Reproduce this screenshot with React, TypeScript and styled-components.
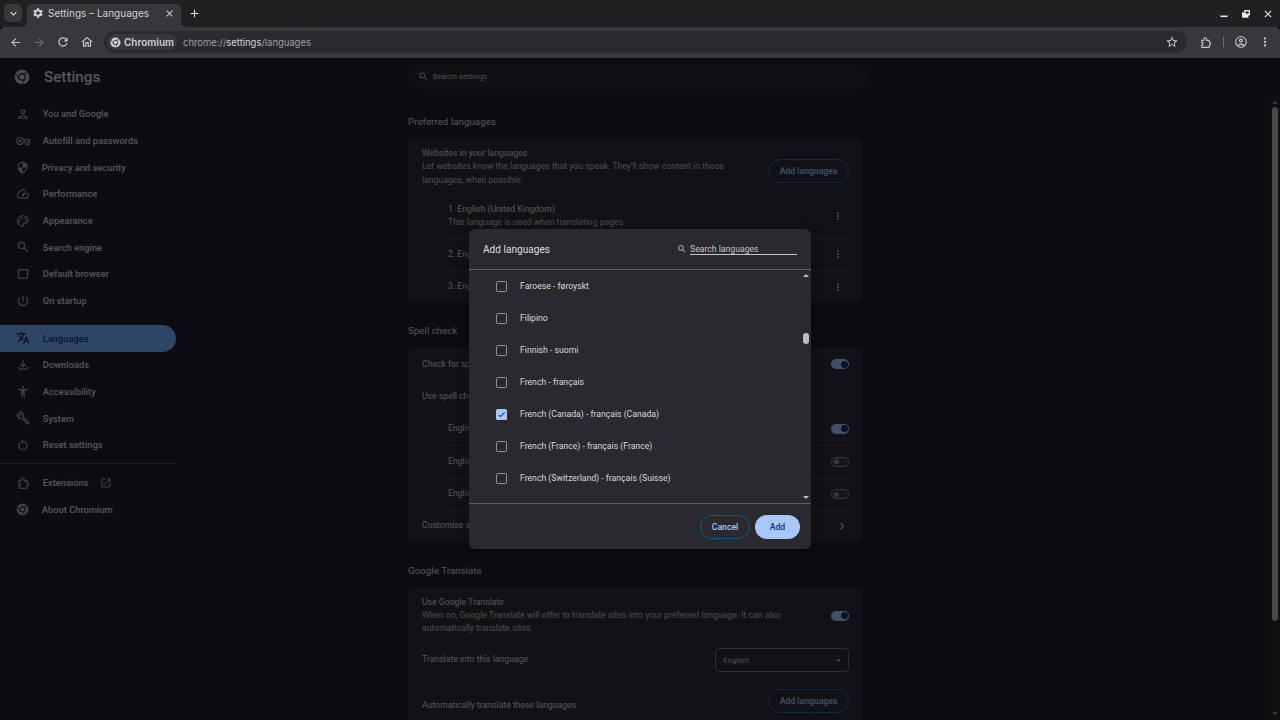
import { FC, ReactNode } from "react";
import styled, { createGlobalStyle } from "styled-components";
import {
  MdOutlinePerson,
  MdOutlineVpnKey,
  MdOutlineSpeed,
  MdOutlinePalette,
  MdSearch,
  MdCrop54,
  MdPowerSettingsNew,
  MdTranslate,
  MdOutlineFileDownload,
  MdAccessibilityNew,
  MdOutlineBuild,
  MdRestartAlt,
  MdOpenInNew,
  MdArrowBack,
  MdArrowForward,
  MdRefresh,
  MdOutlineHome,
  MdStarBorder,
  MdOutlineAccountCircle,
  MdMoreVert,
  MdClose,
  MdAdd,
  MdKeyboardArrowDown,
  MdArrowDropDown,
  MdSettings,
  MdChevronRight,
  MdCheck,
  MdSecurity,
} from "react-icons/md";

const GlobalStyle = createGlobalStyle`
  html, body {
    margin: 0;
    height: 100%;
    background: #0d0c10;
    overflow: hidden;
  }
  * { box-sizing: border-box; }
  body { font-family: Roboto, "Liberation Sans", sans-serif; }
`;

const Window = styled.div`
  width: 1280px;
  height: 720px;
  display: flex;
  flex-direction: column;
  overflow: hidden;
`;

/* browser chrome */
const TabStrip = styled.div`
  height: 27px;
  flex: none;
  background: #201f22;
  display: flex;
  align-items: flex-end;
  padding: 0 1px 0 4px;
`;

const TabSearch = styled.div`
  width: 18px;
  height: 18px;
  margin-bottom: 5px;
  border-radius: 5px;
  background: #38373b;
  color: #e3e3e3;
  display: flex;
  align-items: center;
  justify-content: center;
`;

const Tab = styled.div`
  position: relative;
  width: 154px;
  height: 23px;
  margin-left: 5px;
  padding: 0 6px 5px 5px;
  border-radius: 6px 6px 0 0;
  background: #38373b;
  color: #d0d0d2;
  display: flex;
  align-items: center;
  gap: 4px;
  font: 400 10px Inter, Roboto, sans-serif;

  &::before,
  &::after {
    content: "";
    position: absolute;
    bottom: 0;
    width: 6px;
    height: 6px;
  }
  &::before {
    left: -6px;
    background: radial-gradient(circle at 0 0, transparent 6px, #38373b 6.5px);
  }
  &::after {
    right: -6px;
    background: radial-gradient(circle at 100% 0, transparent 6px, #38373b 6.5px);
  }
`;

const TabTitle = styled.span`
  flex: 1;
  white-space: nowrap;
`;

const NewTab = styled.div`
  width: 18px;
  height: 18px;
  margin: 0 0 5px 4px;
  color: #e3e3e3;
  display: flex;
  align-items: center;
  justify-content: center;
`;

const WindowControls = styled.div`
  margin-left: auto;
  height: 27px;
  display: flex;
  align-items: center;
  color: #e8e8e8;
`;

const WindowButton = styled.div`
  width: 22px;
  height: 22px;
  display: flex;
  align-items: center;
  justify-content: center;
`;

const Toolbar = styled.div`
  height: 31px;
  flex: none;
  background: #38373b;
  border-radius: 5px 5px 0 0;
  display: flex;
  align-items: center;
  padding: 0 3px 1px 3px;
`;

const ToolButton = styled.div<{ $dim?: boolean }>`
  width: 24px;
  height: 24px;
  flex: none;
  color: ${(p) => (p.$dim ? "#6f6e72" : "#c4c4c6")};
  display: flex;
  align-items: center;
  justify-content: center;
`;

const Omnibox = styled.div`
  flex: 1;
  height: 22px;
  margin: 0 6px 0 5px;
  padding: 0 3px;
  border-radius: 11px;
  background: #2a292d;
  display: flex;
  align-items: center;
  font: 400 9.45px Inter, Roboto, sans-serif;
  color: #d4d4d6;
`;

const SiteChip = styled.div`
  height: 16px;
  width: 70px;
  flex: none;
  padding-left: 3px;
  border-radius: 8px;
  background: #38373b;
  display: flex;
  align-items: center;
  gap: 3px;
  font-size: 10px;
  font-weight: 600;
  color: #d0d0d2;
`;

const Url = styled.span`
  margin-left: 6px;
  color: #a0a0a2;
  flex: 1;
  b {
    font-weight: 400;
    color: #d6d6d8;
  }
`;

const ToolDivider = styled.div`
  width: 1px;
  height: 10px;
  margin: 0 5px 0 6px;
  background: #6c6b6f;
`;

/* settings page, drawn at its normal colours and dimmed by the backdrop */
const Content = styled.div`
  position: relative;
  flex: 1;
  min-height: 0;
  background: #211f28;
  display: flex;
  overflow: hidden;
  color: #d6d6d6;
`;

const Sidebar = styled.nav`
  width: 176px;
  flex: none;
`;

const Brand = styled.div`
  height: 42.67px;
  padding: 0 0 5px 14px;
  display: flex;
  align-items: center;
  gap: 14px;
  font-size: 15.2px;
  font-weight: 500;
  color: #dadada;
`;

const NavItem = styled.div<{ $active?: boolean }>`
  height: 26.67px;
  padding-left: 15.5px;
  border-radius: 0 14px 14px 0;
  display: flex;
  align-items: center;
  gap: 13.3px;
  font-size: 9.33px;
  font-weight: 500;
  white-space: nowrap;
  background: ${(p) => (p.$active ? "#75acff" : "transparent")};
  color: ${(p) => (p.$active ? "#0a3c86" : "#d6d6d6")};

  svg {
    flex: none;
    color: ${(p) => (p.$active ? "#0a1d3c" : "#a6a6a8")};
  }
`;

const NavGroup = styled.div<{ $top: number }>`
  margin-top: ${(p) => p.$top}px;
`;

const NavDivider = styled.div`
  height: 1px;
  margin: 5.3px 0 5px;
  background: #47464d;
`;

const ExternalMark = styled(MdOpenInNew)`
  margin-left: -2px;
`;

const Main = styled.main`
  width: 460px;
  flex: none;
  margin-left: 232px;
  padding-top: 6px;
`;

const SearchBox = styled.div`
  height: 25px;
  margin-bottom: 23px;
  padding-left: 10px;
  border-radius: 13px;
  background: #292830;
  display: flex;
  align-items: center;
  gap: 3.5px;
  font-size: 7.95px;
  color: #c0c0c0;
`;

const SectionTitle = styled.h2`
  height: 18px;
  margin: 19px 0 9px;
  display: flex;
  align-items: center;
  font-size: 9.8px;
  font-weight: 400;
  color: #d6d6d6;
`;

const Card = styled.section`
  width: 454px;
  padding: 0 13px 0 14px;
  border-radius: 5px;
  background: #2f2e38;
`;

const Row = styled.div<{ $height: number; $nested?: boolean; $line?: boolean }>`
  height: ${(p) => p.$height}px;
  margin-left: ${(p) => (p.$nested ? 26 : 0)}px;
  display: flex;
  align-items: center;
  justify-content: space-between;
  border-top: ${(p) => (p.$line ? "1px solid #47464f" : "0")};
  font-size: 8.67px;
`;

const PlainRow = styled(Row)`
  position: relative;

  &::before {
    content: "";
    position: absolute;
    left: 26px;
    right: 0;
    top: 0;
    height: 1px;
    background: #47464f;
  }
`;

const TextBlock = styled.div`
  line-height: 13.33px;
  font-size: 8.67px;
  white-space: nowrap;
`;

const Secondary = styled.div`
  color: #bcbcbc;
`;

const RowAction = styled.div<{ $shift?: number }>`
  flex: none;
  margin-top: ${(p) => (p.$shift || 0) * 2}px;
  color: #c0c0c0;
  display: flex;
`;

const DotsButton = styled(RowAction)`
  margin-right: 5px;
`;

const OutlineButton = styled.div`
  width: 81px;
  height: 24px;
  flex: none;
  border: 1px solid #1f6e9f;
  border-radius: 12px;
  color: #a8c7fa;
  display: flex;
  align-items: center;
  justify-content: center;
  font-size: 8.67px;
  font-weight: 500;
`;

const Toggle = styled.div<{ $on?: boolean }>`
  width: 18px;
  height: 10px;
  flex: none;
  padding: 0 ${(p) => (p.$on ? "1.5px" : "2px")};
  border-radius: 5px;
  background: ${(p) => (p.$on ? "#a8c7fa" : "#37363f")};
  border: ${(p) => (p.$on ? "0" : "1px solid #8e8e93")};
  display: flex;
  align-items: center;
  justify-content: ${(p) => (p.$on ? "flex-end" : "flex-start")};

  &::after {
    content: "";
    width: ${(p) => (p.$on ? 7 : 5)}px;
    height: ${(p) => (p.$on ? 7 : 5)}px;
    border-radius: 50%;
    background: ${(p) => (p.$on ? "#062e6f" : "#8e8e93")};
  }
`;

const SelectBox = styled.div`
  width: 134px;
  height: 24px;
  padding: 0 4px 0 7px;
  border: 1px solid #74737b;
  border-radius: 4px;
  display: flex;
  align-items: center;
  justify-content: space-between;
  font-size: 8px;
  color: #bcbcbc;
`;

const PageScrollbar = styled.div`
  width: 10px;
  height: 624px;
  margin: 38px 0 0 auto;
  padding-top: 11px;
  background: #2a2930;
  display: flex;
  flex-direction: column;
  align-items: center;
  position: relative;
`;

const PageThumb = styled.div`
  width: 6px;
  height: 514px;
  border-radius: 3px;
  background: #b5b5b8;
`;

/* dialog */
const Backdrop = styled.div`
  position: absolute;
  inset: 0;
  background: rgba(0, 0, 0, 0.6);
  display: flex;
  align-items: center;
  justify-content: center;
`;

const Dialog = styled.div`
  width: 342px;
  height: 320px;
  border-radius: 6px;
  background: #2a292e;
  display: flex;
  flex-direction: column;
  box-shadow: 0 3px 12px rgba(0, 0, 0, 0.4);
  overflow: hidden;
`;

const DialogHeader = styled.header`
  height: 41px;
  flex: none;
  padding: 0 14px;
  border-bottom: 1px solid #5e5d62;
  display: flex;
  align-items: center;
  justify-content: space-between;
`;

const DialogTitle = styled.h1`
  margin: 1px 0 0;
  font-size: 10.1px;
  font-weight: 400;
  color: #dedede;
`;

const LanguageSearch = styled.div`
  display: flex;
  align-items: center;
  gap: 3px;
  color: #c0c0c0;
  margin-top: -1px;
`;

const SearchField = styled.div`
  width: 107px;
  height: 13px;
  padding-top: 1.5px;
  border-bottom: 1px solid #c7c7c7;
  font-size: 8.67px;
  line-height: 11px;
  color: #c4c4c4;
`;

const ListArea = styled.div`
  flex: 1;
  min-height: 0;
  display: flex;
`;

const LanguageList = styled.ul`
  flex: 1;
  margin: 0;
  padding: 0;
  list-style: none;
`;

const LanguageRow = styled.li`
  height: 32px;
  padding-left: 27px;
  display: flex;
  align-items: center;
  gap: 13px;
  font-size: 8.67px;
  color: #d8d8d8;
`;

const Checkbox = styled.span<{ $checked?: boolean }>`
  width: 11px;
  height: 11px;
  flex: none;
  border-radius: 1.5px;
  border: ${(p) => (p.$checked ? "0" : "1.4px solid #949497")};
  background: ${(p) => (p.$checked ? "#a8c7fa" : "transparent")};
  color: #062e6f;
  display: flex;
  align-items: center;
  justify-content: center;
`;

const DialogScrollbar = styled.div`
  width: 10px;
  flex: none;
  position: relative;
  background: #2a292e;
`;

const Arrow = styled.div<{ $down?: boolean; $color: string; $at: string }>`
  position: absolute;
  left: 50%;
  ${(p) => p.$at};
  margin-left: -3px;
  border-left: 3px solid transparent;
  border-right: 3px solid transparent;
  ${(p) => (p.$down ? "border-top" : "border-bottom")}: 3.5px solid ${(p) => p.$color};
`;

const DialogThumb = styled.div`
  position: absolute;
  left: 2px;
  top: 63px;
  width: 6px;
  height: 11px;
  border-radius: 3px;
  background: #bdbdc0;
`;

const DialogFooter = styled.footer`
  height: 46px;
  flex: none;
  padding: 0 11px 0 0;
  border-top: 1px solid #5e5d62;
  display: flex;
  align-items: center;
  justify-content: flex-end;
  gap: 5px;
`;

const CancelButton = styled.div`
  width: 50px;
  height: 24px;
  border: 1px solid #0b5a8e;
  border-radius: 12px;
  color: #a8c7fa;
  display: flex;
  align-items: center;
  justify-content: center;
  font-size: 8.67px;
  font-weight: 500;
`;

const AddButton = styled(CancelButton)`
  width: 45px;
  border: 0;
  background: #a8c7fa;
  color: #0b3470;
`;

const ChromiumLogo: FC<{ size: number; ring: string; hole: string }> = ({ size, ring, hole }) => (
  <svg width={size} height={size} viewBox="0 0 24 24">
    <circle cx="12" cy="12" r="11" fill={ring} />
    <circle cx="12" cy="12" r="5.6" fill={hole} />
    <circle cx="12" cy="12" r="3.9" fill={ring} />
    <path d="M12 6.4H22M7.2 14.8L2.4 6.4M16.8 14.8L11.8 23" stroke={hole} strokeWidth="1.2" fill="none" />
  </svg>
);

const RestoreIcon: FC = () => (
  <svg width="10" height="10" viewBox="0 0 10 10">
    <path d="M3.2 1H9V6.4H7.4V8.8H1V3.4H3.2Z" fill="currentColor" />
    <path d="M4.6 2.4H7.6V4.6H4.6Z" fill="#201f22" />
  </svg>
);

const ExtensionIcon: FC<{ size: number }> = ({ size }) => (
  <svg width={size} height={size} viewBox="0 0 24 24" fill="none" stroke="currentColor" strokeWidth="2">
    <path d="M5 8H9V6.5A2.5 2.5 0 0 1 14 5.5V8H19V12H20.5A2.5 2.5 0 0 1 20.5 16H19V21H5V16.5H7V12.5H5Z" strokeLinejoin="round" />
  </svg>
);

const NAV_TOP: [ReactNode, string][] = [
  [<MdOutlinePerson size={14} key="a" />, "You and Google"],
  [<MdOutlineVpnKey size={14} key="b" />, "Autofill and passwords"],
  [<MdSecurity size={13} key="c" />, "Privacy and security"],
  [<MdOutlineSpeed size={14} key="d" />, "Performance"],
  [<MdOutlinePalette size={14} key="e" />, "Appearance"],
  [<MdSearch size={14} key="f" />, "Search engine"],
  [<MdCrop54 size={14} key="g" />, "Default browser"],
  [<MdPowerSettingsNew size={14} key="h" />, "On startup"],
];

const NAV_LOWER: [ReactNode, string][] = [
  [<MdOutlineFileDownload size={14} key="a" />, "Downloads"],
  [<MdAccessibilityNew size={14} key="b" />, "Accessibility"],
  [<MdOutlineBuild size={14} key="c" />, "System"],
  [<MdRestartAlt size={14} key="d" />, "Reset settings"],
];

const LANGUAGES = [
  "Faroese - føroyskt",
  "Filipino",
  "Finnish - suomi",
  "French - français",
  "French (Canada) - français (Canada)",
  "French (France) - français (France)",
  "French (Switzerland) - français (Suisse)",
];

const App: FC = () => (
  <Window>
    <GlobalStyle />
    <TabStrip>
      <TabSearch>
        <MdKeyboardArrowDown size={13} />
      </TabSearch>
      <Tab>
        <MdSettings size={12} />
        <TabTitle>Settings – Languages</TabTitle>
        <MdClose size={11} />
      </Tab>
      <NewTab>
        <MdAdd size={13} />
      </NewTab>
      <WindowControls>
        <WindowButton>
          <svg width="8" height="8" viewBox="0 0 8 8">
            <rect x="0.5" y="5.5" width="7" height="1.6" fill="currentColor" />
          </svg>
        </WindowButton>
        <WindowButton>
          <RestoreIcon />
        </WindowButton>
        <WindowButton>
          <MdClose size={12} />
        </WindowButton>
      </WindowControls>
    </TabStrip>

    <Toolbar>
      <ToolButton>
        <MdArrowBack size={13} />
      </ToolButton>
      <ToolButton $dim>
        <MdArrowForward size={13} />
      </ToolButton>
      <ToolButton>
        <MdRefresh size={14} />
      </ToolButton>
      <ToolButton>
        <MdOutlineHome size={14} />
      </ToolButton>
      <Omnibox>
        <SiteChip>
          <ChromiumLogo size={11} ring="#d0d0d2" hole="#38373b" />
          Chromium
        </SiteChip>
        <Url>
          chrome://<b>settings</b>/languages
        </Url>
        <ToolButton>
          <MdStarBorder size={14} />
        </ToolButton>
      </Omnibox>
      <ToolButton>
        <ExtensionIcon size={13} />
      </ToolButton>
      <ToolDivider />
      <ToolButton>
        <MdOutlineAccountCircle size={14} />
      </ToolButton>
      <ToolButton>
        <MdMoreVert size={14} />
      </ToolButton>
    </Toolbar>

    <Content>
      <Sidebar>
        <Brand>
          <ChromiumLogo size={16} ring="#c0c0c0" hole="#211f28" />
          Settings
        </Brand>
        {NAV_TOP.map(([icon, label]) => (
          <NavItem key={label}>
            {icon}
            {label}
          </NavItem>
        ))}
        <NavGroup $top={11}>
          <NavItem $active>
            <MdTranslate size={14} />
            Languages
          </NavItem>
          {NAV_LOWER.map(([icon, label]) => (
            <NavItem key={label}>
              {icon}
              {label}
            </NavItem>
          ))}
        </NavGroup>
        <NavDivider />
        <NavItem>
          <ExtensionIcon size={14} />
          Extensions
          <ExternalMark size={12} />
        </NavItem>
        <NavItem>
          <ChromiumLogo size={13} ring="#a6a6a8" hole="#211f28" />
          About Chromium
        </NavItem>
      </Sidebar>

      <Main>
        <SearchBox>
          <MdSearch size={11} />
          Search settings
        </SearchBox>

        <SectionTitle>Preferred languages</SectionTitle>
        <Card>
          <Row $height={56}>
            <TextBlock>
              Websites in your languages
              <Secondary>
                Let websites know the languages that you speak. They'll show content in those
                <br />
                languages, when possible.
              </Secondary>
            </TextBlock>
            <RowAction $shift={4}>
              <OutlineButton>Add languages</OutlineButton>
            </RowAction>
          </Row>
          <Row $height={42.5} $nested>
            <TextBlock>
              1. English (United Kingdom)
              <Secondary>This language is used when translating pages</Secondary>
            </TextBlock>
            <DotsButton>
              <MdMoreVert size={12} />
            </DotsButton>
          </Row>
          <Row $height={32.5} $nested $line>
            <TextBlock>2. English (United States)</TextBlock>
            <DotsButton>
              <MdMoreVert size={12} />
            </DotsButton>
          </Row>
          <Row $height={32} $nested $line>
            <TextBlock>3. English</TextBlock>
            <DotsButton>
              <MdMoreVert size={12} />
            </DotsButton>
          </Row>
        </Card>

        <SectionTitle>Spell check</SectionTitle>
        <Card>
          <Row $height={32.5}>
            <TextBlock>Check for spelling errors when you type on web pages</TextBlock>
            <Toggle $on />
          </Row>
          <Row $height={32}>
            <TextBlock>Use spell check for</TextBlock>
          </Row>
          <Row $height={32.5} $nested>
            <TextBlock>English (United Kingdom)</TextBlock>
            <Toggle $on />
          </Row>
          <Row $height={32.5} $nested $line>
            <TextBlock>English (United States)</TextBlock>
            <Toggle />
          </Row>
          <Row $height={32} $nested $line>
            <TextBlock>English</TextBlock>
            <Toggle />
          </Row>
          <PlainRow $height={32.5}>
            <TextBlock>Customise spell check</TextBlock>
            <RowAction>
              <MdChevronRight size={14} />
            </RowAction>
          </PlainRow>
        </Card>

        <SectionTitle>Google Translate</SectionTitle>
        <Card>
          <Row $height={55.5}>
            <TextBlock>
              Use Google Translate
              <Secondary>
                When on, Google Translate will offer to translate sites into your preferred language. It can also
                <br />
                automatically translate sites.
              </Secondary>
            </TextBlock>
            <Toggle $on />
          </Row>
          <Row $height={33}>
            <TextBlock>Translate into this language</TextBlock>
            <SelectBox>
              English
              <MdArrowDropDown size={11} />
            </SelectBox>
          </Row>
          <Row $height={58}>
            <TextBlock>Automatically translate these languages</TextBlock>
            <RowAction $shift={-5}>
              <OutlineButton>Add languages</OutlineButton>
            </RowAction>
          </Row>
        </Card>
      </Main>

      <PageScrollbar>
        <Arrow $color="#8f8e93" $at="top: 5px" />
        <PageThumb />
        <Arrow $down $color="#8f8e93" $at="bottom: 5px" />
      </PageScrollbar>

      <Backdrop>
        <Dialog>
          <DialogHeader>
            <DialogTitle>Add languages</DialogTitle>
            <LanguageSearch>
              <MdSearch size={10} />
              <SearchField>Search languages</SearchField>
            </LanguageSearch>
          </DialogHeader>
          <ListArea>
            <LanguageList>
              {LANGUAGES.map((name) => (
                <LanguageRow key={name}>
                  <Checkbox $checked={name.includes("Canada")}>
                    {name.includes("Canada") && <MdCheck size={9} />}
                  </Checkbox>
                  {name}
                </LanguageRow>
              ))}
            </LanguageList>
            <DialogScrollbar>
              <Arrow $color="#bdbdc0" $at="top: 4px" />
              <DialogThumb />
              <Arrow $down $color="#bdbdc0" $at="bottom: 4px" />
            </DialogScrollbar>
          </ListArea>
          <DialogFooter>
            <CancelButton>Cancel</CancelButton>
            <AddButton>Add</AddButton>
          </DialogFooter>
        </Dialog>
      </Backdrop>
    </Content>
  </Window>
);

export default App;
